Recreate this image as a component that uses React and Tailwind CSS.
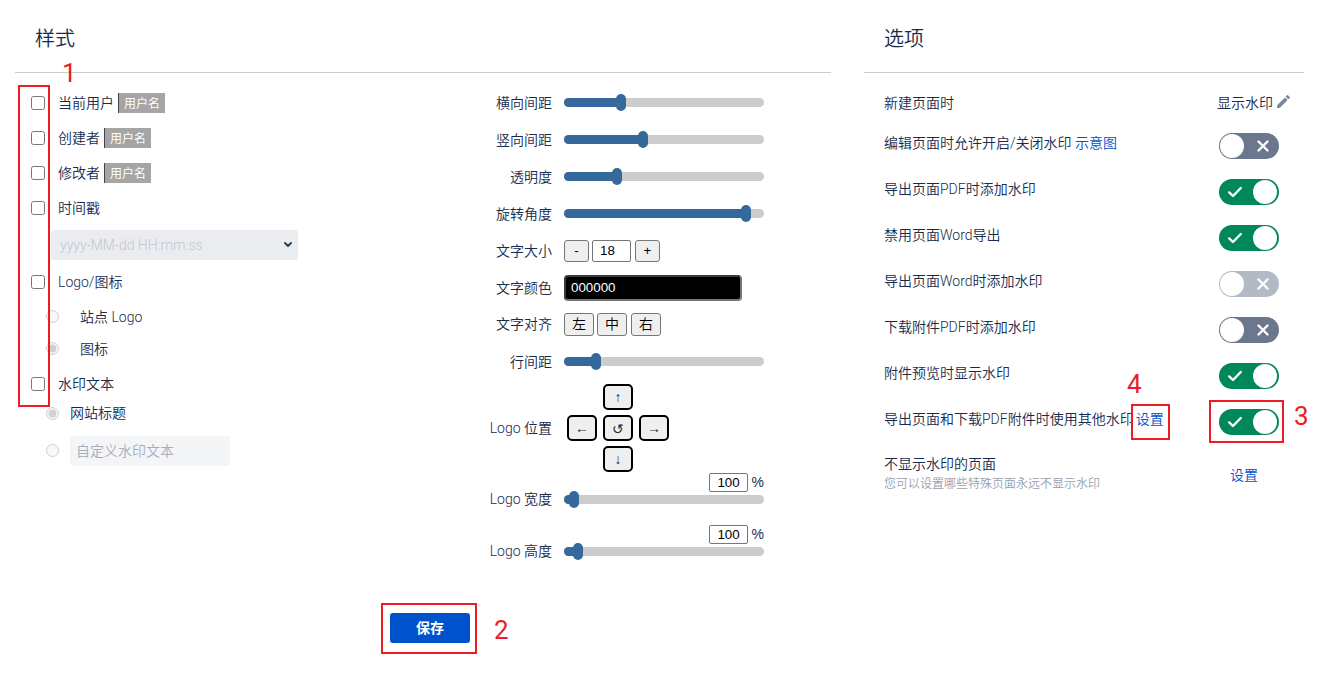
import React from "react";
import { MdEdit } from "react-icons/md";

const CJK = 'Roboto, "Noto Sans CJK SC", sans-serif';
const ARIAL = '"Liberation Sans", Arial, sans-serif';

function Check({ label, tag }) {
  return (
    <div className="flex items-center h-[34px] mb-px pl-[16px]">
      <input type="checkbox" className="w-[14px] h-[14px]" />
      <span className="ml-[13px] text-[14px] leading-[20px] pb-[1px]">{label}</span>
      {tag && (
        <span className="ml-[4px] h-[20px] w-[47px] pt-[1px] bg-[#a5a5a5] border-l border-[#444] text-white font-normal text-[12px] flex items-center justify-center">
          {tag}
        </span>
      )}
    </div>
  );
}

function Slider({ label, pos }) {
  return (
    <div className="flex items-center h-[37px]">
      <div className="w-[72px] text-right text-[14px] leading-[20px] whitespace-nowrap mr-[12px]">{label}</div>
      <Track pos={pos} />
    </div>
  );
}

function Label({ children }) {
  return <div className="w-[72px] text-right text-[14px] leading-[20px] pb-[1px] whitespace-nowrap mr-[12px]">{children}</div>;
}

function Track({ pos }) {
  return (
    <div className="relative w-[200px] h-[9px] rounded-full bg-[#cccccc]">
      <div className="h-full rounded-full bg-[#36699b]" style={{ width: pos }} />
      <div className="absolute top-[-4px] w-[10px] h-[17px] rounded-full bg-[#36699b]" style={{ left: pos - 5 }} />
    </div>
  );
}

function NativeBtn({ className, children }) {
  return (
    <button className={"bg-[#efefef] border border-[#767676] rounded-[3px] text-[13.33px] text-black flex items-center justify-center " + className}
      style={{ fontFamily: ARIAL }}>
      {children}
    </button>
  );
}

function DirBtn({ children, font }) {
  return (
    <button className="w-[30px] h-[26px] bg-[#efefef] border-2 border-black rounded-[5px] text-[14px] font-normal text-[#172b4d] flex items-center justify-center"
      style={{ fontFamily: font || ARIAL }}>
      {children}
    </button>
  );
}

function NumRow({ label, pos }) {
  return (
    <div>
      <div className="flex justify-end items-center h-[19px] w-[284px] text-[14px]">
        <div className="w-[39px] h-[19px] border border-[#767676] rounded-[2px] text-[13.33px] text-black flex items-center justify-center"
          style={{ fontFamily: ARIAL }}>100</div>
        <span className="w-[16px] text-right" style={{ fontFamily: ARIAL }}>%</span>
      </div>
      <div className="flex items-center h-[17px] -mt-px">
        <Label>{label}</Label>
        <Track pos={pos} />
      </div>
    </div>
  );
}

function Toggle({ on, disabled }) {
  const bg = on ? "bg-[#00875a]" : disabled ? "bg-[#b3bac5]" : "bg-[#6b778c]";
  return (
    <div className={"relative w-[60px] h-[26px] rounded-full " + bg}>
      <div className={"absolute top-[1px] w-[24px] h-[24px] rounded-full bg-white " + (on ? "right-[2px]" : "left-[1px]")} />
      {on ? (
        <svg className="absolute left-[9px] top-[7px]" width="14" height="12" viewBox="0 0 14 12" fill="none">
          <path d="M1.2 6.4 L5 10 L12.8 2" stroke="#fff" strokeWidth="2.4" strokeLinecap="round" strokeLinejoin="round" />
        </svg>
      ) : (
        <svg className="absolute left-[38px] top-[7px]" width="12" height="12" viewBox="0 0 12 12" fill="none">
          <path d="M1.5 1.5 L10.5 10.5 M10.5 1.5 L1.5 10.5" stroke="#fff" strokeWidth="2.4" strokeLinecap="round" />
        </svg>
      )}
    </div>
  );
}

function OptRow({ children, on, disabled }) {
  return (
    <div className="flex items-center h-[46px]">
      <div className="w-[335px] text-[14px] leading-[20px] pb-[6px]">{children}</div>
      <Toggle on={on} disabled={disabled} />
    </div>
  );
}

function Box({ className }) {
  return <div className={"absolute border-2 border-[#ed1c24] pointer-events-none " + className} />;
}

function Num({ className, children }) {
  return <div className={"absolute text-[#ed1c24] font-normal text-[26px] leading-none " + className}>{children}</div>;
}

export default function App() {
  return (
    <div className="relative w-[1342px] h-[699px] bg-white text-[#172b4d] overflow-hidden font-[350]" style={{ fontFamily: CJK }}>
      <div className="flex pl-[15px] gap-[33px]">
        {/* Style column */}
        <div className="w-[816px] shrink-0">
          <div className="h-[73px] border-b border-[#cccccc] pl-[20px] pt-[25px] text-[20px] leading-[28px]">样式</div>
          <div className="flex">
            <div className="w-[465px] pt-[13px]">
              <Check label="当前用户" tag="用户名" />
              <Check label="创建者" tag="用户名" />
              <Check label="修改者" tag="用户名" />
              <Check label="时间戳" />
              <div className="relative ml-[36px] mt-[5px] w-[247px] h-[30px] rounded-[3px] bg-[#ebecf0] flex items-center pl-[9px] text-[14px] text-[#c1c7d0]">
                yyyy-MM-dd HH:mm:ss
                <svg className="absolute right-[6px] top-[12px]" width="8" height="6" viewBox="0 0 8 6" fill="none">
                  <path d="M1 1 L4 4 L7 1" stroke="#253858" strokeWidth="1.8" strokeLinecap="round" strokeLinejoin="round" />
                </svg>
              </div>
              <div className="mt-[5px]"><Check label="Logo/图标" /></div>
              <div className="flex items-center h-[32px] pl-[31px]">
                <input type="radio" disabled name="a" className="w-[13px] h-[13px]" />
                <span className="ml-[21px] text-[14px] leading-[20px] pt-[2px]">站点 Logo</span>
              </div>
              <div className="flex items-center h-[32px] pl-[31px]">
                <input type="radio" disabled defaultChecked name="a" className="w-[13px] h-[13px]" />
                <span className="ml-[21px] text-[14px] leading-[20px] pt-[2px]">图标</span>
              </div>
              <div className="mt-[3px]"><Check label="水印文本" /></div>
              <div className="flex items-center h-[22px] pl-[31px]">
                <input type="radio" disabled defaultChecked name="b" className="w-[13px] h-[13px]" />
                <span className="ml-[11px] text-[14px] leading-[20px]">网站标题</span>
              </div>
              <div className="flex items-center pl-[31px] mt-[12px]">
                <input type="radio" disabled name="b" className="w-[13px] h-[13px] mb-[2px]" />
                <div className="ml-[11px] w-[160px] h-[30px] rounded-[3px] bg-[#f4f5f7] flex items-center pl-[6px] text-[14px] text-[#a5adba]">自定义水印文本</div>
              </div>
            </div>
            <div className="pt-[11px]">
              <Slider label="横向间距" pos={57} />
              <Slider label="竖向间距" pos={79} />
              <Slider label="透明度" pos={53} />
              <Slider label="旋转角度" pos={182} />
              <div className="flex items-center h-[38px]">
                <Label>文字大小</Label>
                <NativeBtn className="w-[25px] h-[22px]">-</NativeBtn>
                <div className="ml-[3px] w-[39px] h-[22px] border border-[#767676] rounded-[2px] text-[13.33px] text-black flex items-center pl-[7px]"
                  style={{ fontFamily: ARIAL }}>18</div>
                <NativeBtn className="ml-[4px] w-[25px] h-[22px]">+</NativeBtn>
              </div>
              <div className="flex items-center h-[36px]">
                <Label>文字颜色</Label>
                <div className="w-[178px] h-[26px] bg-black rounded-[4px] border-2 border-t-[#3b3b3b] border-l-[#3b3b3b] border-r-[#767676] border-b-[#767676] text-white text-[13.33px] flex items-center pl-[5px]"
                  style={{ fontFamily: ARIAL }}>000000</div>
              </div>
              <div className="flex items-center h-[37px]">
                <Label>文字对齐</Label>
                <NativeBtn className="w-[30px] h-[23px] !text-[14px]"><span style={{ fontFamily: CJK }}>左</span></NativeBtn>
                <NativeBtn className="ml-[3px] w-[30px] h-[23px] !text-[14px]"><span style={{ fontFamily: CJK }}>中</span></NativeBtn>
                <NativeBtn className="ml-[4px] w-[30px] h-[23px] !text-[14px]"><span style={{ fontFamily: CJK }}>右</span></NativeBtn>
              </div>
              <Slider label="行间距" pos={32} />
              <div className="flex items-center mt-[4px] h-[88px]">
                <Label>Logo 位置</Label>
                <div className="ml-[3px] flex flex-col items-center gap-[5px] w-[102px]">
                  <DirBtn>↑</DirBtn>
                  <div className="flex gap-[6px]">
                    <DirBtn>←</DirBtn>
                    <DirBtn font={'"Noto Sans CJK SC", sans-serif'}>↺</DirBtn>
                    <DirBtn>→</DirBtn>
                  </div>
                  <DirBtn>↓</DirBtn>
                </div>
              </div>
              <div className="mt-[1px]"><NumRow label="Logo 宽度" pos={10} /></div>
              <div className="mt-[17px]"><NumRow label="Logo 高度" pos={14} /></div>
            </div>
          </div>
          <div className="pl-[375px] mt-[53px]">
            <button className="w-[80px] h-[30px] rounded-[3px] bg-[#0052cc] text-white text-[14px] font-bold">保存</button>
          </div>
        </div>

        {/* Options column */}
        <div className="w-[440px] shrink-0">
          <div className="h-[73px] border-b border-[#cccccc] pl-[20px] pt-[25px] text-[20px] leading-[28px]">选项</div>
          <div className="pl-[20px] pt-[13px]">
            <div className="flex items-center h-[34px] mb-[3px] text-[14px] leading-[20px]">
              <div className="w-[333px] pb-[1px]">新建页面时</div>
              <span className="pb-[1px]">显示水印</span>
              <MdEdit className="ml-[2px] text-[#7a869a] mb-[3px]" size={17} />
            </div>
            <OptRow>编辑页面时允许开启/关闭水印 <span className="text-[#0052cc]">示意图</span></OptRow>
            <OptRow on>导出页面PDF时添加水印</OptRow>
            <OptRow on>禁用页面Word导出</OptRow>
            <OptRow disabled>导出页面Word时添加水印</OptRow>
            <OptRow>下载附件PDF时添加水印</OptRow>
            <OptRow on>附件预览时显示水印</OptRow>
            <OptRow on>导出页面和下载PDF附件时使用其他水印<span className="ml-[2px] text-[#0052cc]">设置</span></OptRow>
            <div className="flex items-center h-[60px]">
              <div className="w-[346px]">
                <div className="text-[14px] leading-[19px]">不显示水印的页面</div>
                <div className="text-[12px] leading-[21px] text-[#97a0af]">您可以设置哪些特殊页面永远不显示水印</div>
              </div>
              <span className="text-[14px] leading-[20px] pb-[1px] text-[#0052cc]">设置</span>
            </div>
          </div>
        </div>
      </div>

      <Box className="left-[18px] top-[85px] w-[32px] h-[322px]" />
      <Box className="left-[381px] top-[603px] w-[96px] h-[51px]" />
      <Box className="left-[1209px] top-[400px] w-[75px] h-[43px]" />
      <Box className="left-[1131px] top-[404px] w-[39px] h-[36px]" />
      <Num className="left-[62px] top-[60px]">1</Num>
      <Num className="left-[494px] top-[617px]">2</Num>
      <Num className="left-[1294px] top-[403px]">3</Num>
      <Num className="left-[1127px] top-[371px]">4</Num>
    </div>
  );
}
